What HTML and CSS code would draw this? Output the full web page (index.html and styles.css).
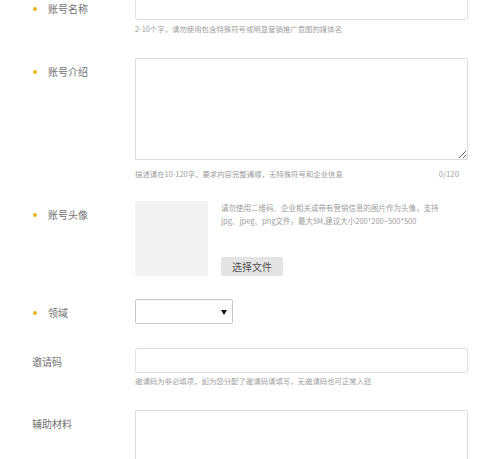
FILE: index.html
```html
<!DOCTYPE html>
<html lang="zh-CN">
<head>
<meta charset="utf-8">
<link rel="stylesheet" href="styles.css">
</head>
<body>
<form class="form">
  <div class="row">
    <div class="label"><span class="dot"></span>账号名称</div>
    <div class="field">
      <input class="input" type="text">
      <div class="help">2-10个字，请勿使用包含特殊符号或明显营销推广意图的媒体名</div>
    </div>
  </div>
  <div class="row">
    <div class="label"><span class="dot"></span>账号介绍</div>
    <div class="field">
      <textarea class="textarea"></textarea>
      <div class="help help-area"><span>描述请在10-120字，要求内容完整通顺，无特殊符号和企业信息</span><span class="count">0/120</span></div>
    </div>
  </div>
  <div class="row">
    <div class="label"><span class="dot"></span>账号头像</div>
    <div class="field avatar-field">
      <div class="avatar"></div>
      <div class="avatar-side">
        <div class="avatar-tip">请勿使用二维码、企业相关或带有营销信息的图片作为头像，支持<br>jpg、jpeg、png文件，最大5M,建议大小200*200~500*500</div>
        <button type="button" class="btn">选择文件</button>
      </div>
    </div>
  </div>
  <div class="row">
    <div class="label"><span class="dot"></span>领域</div>
    <div class="field">
      <div class="select"><span class="arrow"></span></div>
    </div>
  </div>
  <div class="row">
    <div class="label">邀请码</div>
    <div class="field">
      <input class="input" type="text">
      <div class="help help-tight">邀请码为非必填项，如为您分配了邀请码请填写，无邀请码也可正常入驻</div>
    </div>
  </div>
  <div class="row">
    <div class="label">辅助材料</div>
    <div class="field">
      <textarea class="textarea"></textarea>
    </div>
  </div>
</form>
</body>
</html>
```

FILE: styles.css
```css
html, body {
  margin: 0;
  padding: 0;
  background: #fff;
  overflow: hidden;
}
body {
  font-family: "Noto Sans CJK SC", "Noto Sans", sans-serif;
  color: #666;
}
.form {
  margin-top: -5px;
  padding-left: 32px;
}
.row {
  display: flex;
  align-items: flex-start;
  margin-bottom: 23px;
}
.label {
  width: 103px;
  flex: none;
  font-size: 10px;
  line-height: 25px;
  padding-top: 1px;
  color: #717171;
  display: flex;
  align-items: center;
}
.dot {
  width: 4px;
  height: 4px;
  border-radius: 50%;
  background: #f0b323;
  margin-left: 1px;
  margin-right: 11px;
}
.field {
  width: 333px;
  flex: none;
}
.input {
  display: block;
  box-sizing: border-box;
  width: 333px;
  height: 25px;
  margin: 0;
  border: 1px solid #e1e1e1;
  border-radius: 2px;
  padding: 0 6px;
  background: #fff;
  outline: none;
}
.textarea {
  display: block;
  box-sizing: border-box;
  width: 333px;
  height: 102px;
  margin: 0;
  border: 1px solid #dedede;
  border-radius: 1px;
  padding: 4px 6px;
  background: #fff;
  resize: vertical;
  outline: none;
  font-family: inherit;
}
.help {
  margin-top: 3px;
  font-size: 7.4px;
  line-height: 12px;
  color: #9d9d9d;
  white-space: nowrap;
}
.help-area {
  margin-top: 8px;
  margin-bottom: -2px;
  display: flex;
  justify-content: space-between;
}
.help-tight {
  margin-top: 2px;
}
.count {
  padding-right: 9px;
  font-size: 7.8px;
  color: #a5a5a5;
}
.avatar-field {
  display: flex;
}
.avatar {
  width: 73px;
  height: 75px;
  background: #f3f3f3;
  border-radius: 2px;
  flex: none;
}
.avatar-side {
  margin-left: 13px;
  height: 75px;
  display: flex;
  flex-direction: column;
  justify-content: space-between;
  align-items: flex-start;
}
.avatar-tip {
  padding-top: 1px;
  font-size: 7.5px;
  line-height: 12.5px;
  color: #9d9d9d;
  white-space: nowrap;
}
.btn {
  width: 62px;
  height: 19px;
  margin: 0;
  padding: 0;
  border: none;
  border-radius: 2px;
  background: #e4e4e4;
  color: #555;
  font-family: inherit;
  font-size: 10px;
  line-height: 19px;
}
.select {
  position: relative;
  box-sizing: border-box;
  width: 98px;
  height: 25px;
  border: 1px solid #c8c8c8;
  border-radius: 2px;
  background: #fff;
  box-shadow: inset 0 1px 1px rgba(0, 0, 0, 0.04);
}
.arrow {
  position: absolute;
  right: 5px;
  top: 10px;
  width: 0;
  height: 0;
  border-left: 3px solid transparent;
  border-right: 3px solid transparent;
  border-top: 5px solid #111;
}
```
